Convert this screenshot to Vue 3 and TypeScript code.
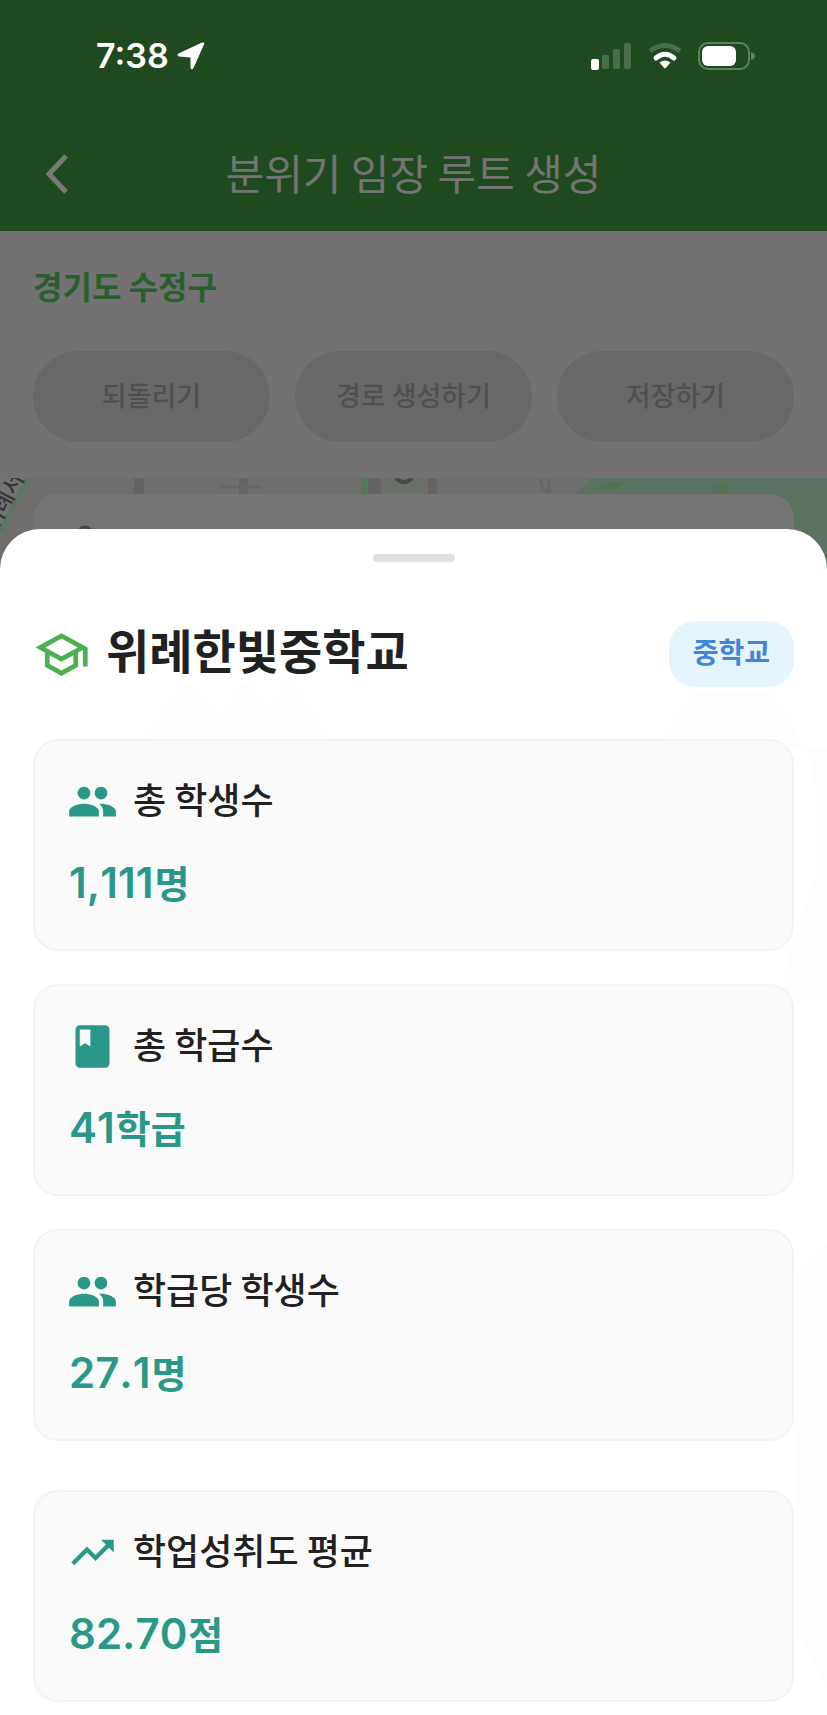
<script setup lang="ts">
type IconName = 'people' | 'book' | 'trend'

interface Stat {
  icon: IconName
  label: string
  value: string
  unit: string
  separated?: boolean
}

const iconPaths: Record<IconName, string> = {
  people:
    'M8 11c1.66 0 2.99-1.34 2.99-3S9.66 5 8 5 5 6.34 5 8s1.34 3 3 3zm8 0c1.66 0 2.99-1.34 2.99-3S17.66 5 16 5s-3 1.34-3 3 1.34 3 3 3zm-8 2c-2.33 0-7 1.17-7 3.5V19h14v-2.5c0-2.33-4.67-3.5-7-3.5zm8 0c-.29 0-.62.02-.97.05 1.16.84 1.97 1.97 1.97 3.45V19h6v-2.5c0-2.33-4.67-3.5-7-3.5z',
  book: 'M18 2H6c-1.1 0-2 .9-2 2v16c0 1.100.9 2 2 2h12c1.100 0 2-.9 2-2V4c0-1.100-.9-2-2-2zM6 4h5v8l-2.500-1.500L6 12V4z',
  trend: 'M16 6l2.290 2.290-4.880 4.880-4-4L2 16.590 3.410 18l6-6 4 4 6.300-6.290L22 12V6z',
}

const actions: string[] = ['되돌리기', '경로 생성하기', '저장하기']

const stats: Stat[] = [
  { icon: 'people', label: '총 학생수', value: '1,111', unit: '명' },
  { icon: 'book', label: '총 학급수', value: '41', unit: '학급' },
  { icon: 'people', label: '학급당 학생수', value: '27.1', unit: '명' },
  { icon: 'trend', label: '학업성취도 평균', value: '82.70', unit: '점', separated: true },
]
</script>

<template>
  <div class="screen">
    <header class="top">
      <div class="status">
        <div class="clock">
          <span>7:38</span>
          <svg class="arrow" viewBox="0 0 28 28" aria-hidden="true">
            <path d="M27 2.500 16.500 26q-1.500 2.500-3 0V15.500L2 14.500q-3-1.500 0-3.200L24.500.8Q28-.5 27 2.500z" fill="#fff" />
          </svg>
        </div>
        <div class="signals">
          <svg width="42" height="28" viewBox="0 0 42 28" aria-hidden="true">
            <rect x="1" y="17" width="8" height="11" rx="2" fill="#fff" />
            <rect x="12" y="13" width="7" height="14" rx="2" fill="#4a6e4c" />
            <rect x="23" y="7" width="7" height="20" rx="2" fill="#4a6e4c" />
            <rect x="34" y="1" width="7" height="26" rx="2" fill="#4a6e4c" />
          </svg>
          <svg width="34" height="28" viewBox="0 0 34 28" aria-hidden="true">
            <path d="M2 9Q17-2 32 9" fill="none" stroke="#4a6e4c" stroke-width="5" />
            <path d="M8 16Q17 8.500 26 16" fill="none" stroke="#fff" stroke-width="5" stroke-linecap="round" />
            <path d="M11.500 20.500Q17 16.500 22.500 20.500L17.800 26q-.8.900-1.600 0z" fill="#fff" />
          </svg>
          <svg width="57" height="28" viewBox="0 0 57 28" aria-hidden="true">
            <rect x="1" y="1" width="50" height="26" rx="9" fill="none" stroke="#5c825e" stroke-width="2" />
            <rect x="4" y="4" width="34" height="20" rx="6" fill="#fff" />
            <path d="M53 10q4 1 4 4t-4 4z" fill="#5c825e" />
          </svg>
        </div>
      </div>
      <nav class="bar">
        <button class="back" type="button" aria-label="뒤로">
          <svg viewBox="0 0 24 42" aria-hidden="true">
            <path d="M21 3 4 21l17 18" fill="none" stroke="#7b787b" stroke-width="5" />
          </svg>
        </button>
        <h1>분위기 임장 루트 생성</h1>
      </nav>
    </header>

    <section class="panel">
      <p class="region">경기도 수정구</p>
      <div class="actions">
        <button v-for="action in actions" :key="action" type="button" disabled>{{ action }}</button>
      </div>
    </section>

    <div class="map">
      <svg class="tiles" viewBox="0 0 827 100" preserveAspectRatio="xMidYMin slice" aria-hidden="true">
        <rect width="827" height="100" fill="#6f6e6c" />
        <path d="M0 0h32L0 60z" fill="#737374" />
        <path d="M28 0 0 54" stroke="#5b7762" stroke-width="5" />
        <path d="M134 0h10v18h-10zM239 0h9v18h-9zM368 0h13v18h-13zM428 0h9v18h-9z" fill="#636363" />
        <path d="M361 0h6v18h-6z" fill="#4e7a58" />
        <path d="M220 9h41M421 0v16M541 0q0 14 8 14V0" fill="none" stroke="#666" stroke-width="3" />
        <path d="M384 0h40v18h-40z" fill="#697068" />
        <path d="M396 0q8 8 16 0" fill="none" stroke="#4a4a4a" stroke-width="4" />
        <path d="M590 0h237v100H720L575 18z" fill="#5b7261" />
        <path d="M604 4h22l-12 8h-20zM712 8q8-8 16 0v8h-16z" fill="#556f55" />
        <text x="-4" y="54" transform="rotate(-62 -4 54)" font-size="22" font-weight="500" fill="#353535">위례서</text>
      </svg>
      <div class="search">
        <svg width="16" height="16" viewBox="0 0 16 16" aria-hidden="true">
          <circle cx="8" cy="8" r="6" fill="none" stroke="#444" stroke-width="3" />
        </svg>
      </div>
    </div>

    <main class="sheet">
      <svg class="watermark" viewBox="0 0 827 1187" preserveAspectRatio="xMidYMin slice" aria-hidden="true">
        <path
          d="M143 212 182 154h10l25 34 26-34h7l18 24 17-24h8l41 58zM661 212l31-50h79l36 58q12 40 9 120l-40 130h51v692l-30-60V900l-41-104 80-92V220z"
          fill="#fdfdfd"
        />
      </svg>
      <div class="handle"></div>
      <div class="heading">
        <svg class="school" viewBox="0 0 24 24" aria-hidden="true">
          <path
            d="M12 3 1 9l4 2.180v6L12 21l7-3.820v-6l2-1.090V17h2V9L12 3zm6.820 6L12 12.720 5.180 9 12 5.280 18.820 9zM17 15.990l-5 2.730-5-2.730v-3.720L12 15l5-2.730v3.720z"
            fill="#4caf50"
          />
        </svg>
        <h2>위례한빛중학교</h2>
        <span class="badge">중학교</span>
      </div>
      <dl class="stats">
        <div v-for="stat in stats" :key="stat.label" class="card" :class="{ separated: stat.separated }">
          <dt>
            <svg viewBox="0 0 24 24" aria-hidden="true"><path :d="iconPaths[stat.icon]" fill="#2a9888" /></svg>
            <span class="label">{{ stat.label }}</span>
          </dt>
          <dd><span class="number">{{ stat.value }}</span><span>{{ stat.unit }}</span></dd>
        </div>
      </dl>
    </main>
  </div>
</template>

<style>
body {
  margin: 0;
  background: #fff;
}
</style>

<style scoped>
.screen {
  display: flex;
  flex-direction: column;
  min-height: 100vh;
  font-family: 'Noto Sans CJK KR', 'Noto Sans', sans-serif;
  color: #212121;
  overflow: hidden;
}
.screen * {
  box-sizing: border-box;
}
h1,
h2,
p,
dl,
dd {
  margin: 0;
}
svg {
  display: block;
  flex: none;
}
button {
  border: 0;
  padding: 0;
  font-family: inherit;
}
.top {
  background: #1f4a20;
}
.status {
  display: flex;
  align-items: center;
  justify-content: space-between;
  height: 112px;
  padding: 0 72px 0 96px;
}
.clock {
  display: flex;
  align-items: center;
  gap: 8px;
  color: #fff;
  font: 600 34px/40px Inter, sans-serif;
}
.arrow {
  width: 28px;
  height: 28px;
}
.signals {
  display: flex;
  gap: 16px;
}
.bar {
  display: grid;
  grid-template-columns: 48px 1fr 48px;
  align-items: center;
  height: 119px;
  padding: 0 33px;
}
.back {
  display: flex;
  justify-content: center;
  padding-top: 4px;
  background: none;
}
.back svg {
  width: 24px;
  height: 42px;
}
h1 {
  color: #747474;
  font-size: 42px;
  font-weight: 400;
  line-height: 56px;
  text-align: center;
}
.panel {
  padding: 30px 33px 36px;
  background: #737173;
}
.region {
  color: #285f2b;
  font-size: 32px;
  font-weight: 700;
  line-height: 48px;
}
.actions {
  display: grid;
  grid-template-columns: repeat(3, 1fr);
  gap: 25px;
  margin-top: 42px;
}
.actions button {
  height: 91px;
  padding-bottom: 5px;
  border-radius: 46px;
  background: #686868;
  color: #4f4f4f;
  font-size: 27px;
  font-weight: 500;
}
.map {
  position: relative;
  height: 100px;
  padding: 16px 33px 0;
}
.tiles {
  position: absolute;
  inset: 0;
  width: 100%;
  height: 100%;
}
.search {
  position: relative;
  height: 60px;
  padding: 31px 44px 0;
  border-radius: 24px;
  background: #757575;
}
.sheet {
  position: relative;
  flex: 1;
  margin-top: -49px;
  padding: 25px 33px 12px;
  border-radius: 40px 40px 0 0;
  background: #fff;
  overflow: hidden;
}
.watermark {
  position: absolute;
  inset: 0;
  width: 100%;
  height: 100%;
}
.handle {
  position: relative;
  width: 82px;
  height: 8px;
  margin: 0 auto;
  border-radius: 4px;
  background: #e0e0e0;
}
.heading {
  position: relative;
  display: flex;
  align-items: center;
  gap: 16px;
  margin-top: 59px;
}
.school {
  width: 57px;
  height: 57px;
}
h2 {
  flex: 1;
  padding-bottom: 10px;
  font-size: 47px;
  font-weight: 700;
  line-height: 56px;
}
.badge {
  padding: 0 24px 6px;
  border-radius: 26px;
  background: #e6f4fe;
  color: #4285d6;
  font-size: 28px;
  font-weight: 700;
  line-height: 60px;
}
.stats {
  position: relative;
  display: flex;
  flex-direction: column;
  gap: 33px;
  margin-top: 52px;
}
.card {
  height: 212px;
  padding: 34px 32px 0;
  border: 2px solid #f3f3f3;
  border-radius: 25px;
  background: #fafafa;
}
.separated {
  margin-top: 16px;
}
dt {
  display: flex;
  align-items: center;
  gap: 15px;
  font-size: 36px;
  font-weight: 500;
}
.label {
  padding-bottom: 6px;
  line-height: 46px;
}
dt svg {
  width: 51px;
  height: 51px;
}
dd {
  display: flex;
  align-items: baseline;
  gap: 1px;
  margin-top: 27px;
  padding-left: 2px;
  color: #2a9888;
  font-size: 38px;
  font-weight: 700;
  line-height: 56px;
}
.number {
  font-family: Inter, sans-serif;
  font-size: 42px;
  font-weight: 600;
  font-kerning: none;
}
</style>
